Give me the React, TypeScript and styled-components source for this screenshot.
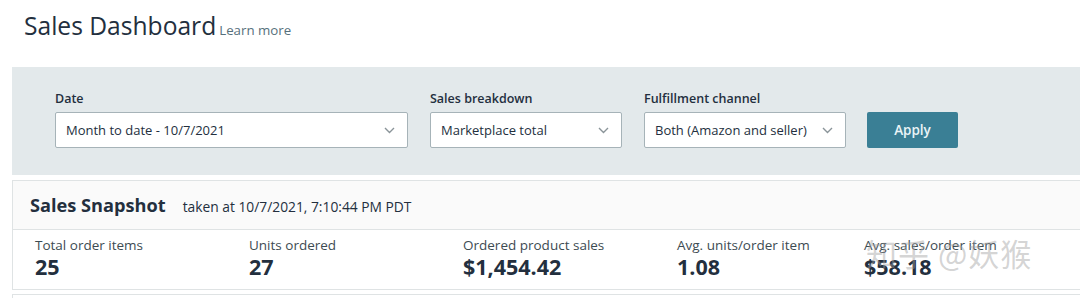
import React from "react";
import styled, { createGlobalStyle } from "styled-components";

const Global = createGlobalStyle`
  html, body { margin: 0; padding: 0; background: #ffffff; }
  body { font-family: "Open Sans", "Noto Sans", Arial, sans-serif; color: #232f3e; }
  * { box-sizing: border-box; }
`;

const Page = styled.div`
  width: 1080px;
  height: 298px;
  overflow: hidden;
  position: relative;
`;

const Header = styled.div`
  display: flex;
  align-items: baseline;
  gap: 3px;
  padding: 9px 0 0 24px;
  height: 67px;
`;

const Title = styled.h1`
  margin: 0;
  font-size: 24.6px;
  font-weight: 400;
  color: #232f3e;
`;

const LearnMore = styled.a`
  font-size: 13.3px;
  color: #56707c;
  text-decoration: none;
`;

const FilterPanel = styled.div`
  margin-left: 12px;
  height: 108px;
  background: #e3e9eb;
  display: flex;
  align-items: flex-end;
  gap: 22px;
  padding: 0 0 27px 43px;
`;

const Field = styled.div`
  display: flex;
  flex-direction: column;
  gap: 5px;
`;

const Label = styled.label`
  font-size: 12.5px;
  font-weight: 600;
  color: #232f3e;
  line-height: 16px;
`;

const Select = styled.div<{ $w: number }>`
  width: ${(p) => p.$w}px;
  height: 36px;
  background: #ffffff;
  border: 1px solid #a6b3b8;
  border-radius: 2px;
  display: flex;
  align-items: center;
  justify-content: space-between;
  padding: 0 12px 0 10px;
  font-size: 13px;
  color: #232f3e;
`;

const Chevron = () => (
  <svg width="11" height="7" viewBox="0 0 11 7" fill="none">
    <path d="M1 1l4.5 4.5L10 1" stroke="#8a9499" strokeWidth="1.4" />
  </svg>
);

const ApplyButton = styled.button`
  width: 91px;
  height: 36px;
  margin-left: -1px;
  border: none;
  border-radius: 2px;
  background: #3a7f95;
  color: #eaf4f7;
  font-family: inherit;
  font-size: 13.5px;
  font-weight: 600;
`;

const Card = styled.div`
  margin: 5px 0 0 12px;
  border: 1px solid #dfe3e4;
  border-right: none;
`;

const CardHeader = styled.div`
  height: 49px;
  background: #fafafa;
  border-bottom: 1px solid #dfe3e4;
  display: flex;
  align-items: center;
  gap: 17px;
  padding-left: 17px;
`;

const CardTitle = styled.h2`
  margin: 0;
  font-size: 18.2px;
  font-weight: 700;
  color: #232f3e;
`;

const Taken = styled.span`
  font-size: 13.8px;
  color: #232f3e;
  padding-top: 2px;
`;

const Metrics = styled.div`
  display: grid;
  grid-template-columns: 214px 214px 214px 187px 1fr;
  padding: 7px 0 10px 22px;
`;

const Metric = styled.div`
  display: flex;
  flex-direction: column;
`;

const MetricLabel = styled.span`
  font-size: 13.5px;
  color: #3d4b52;
  line-height: 17px;
`;

const MetricValue = styled.span`
  font-size: 21.5px;
  font-weight: 700;
  color: #232f3e;
  line-height: 25px;
`;

const NextCard = styled.div`
  margin: 4px 0 0 12px;
  height: 10px;
  border-top: 1px solid #dfe3e4;
  border-left: 1px solid #dfe3e4;
`;

const Watermark = styled.div`
  position: absolute;
  left: 866px;
  top: 230px;
  font-family: "Noto Sans CJK SC", sans-serif;
  font-size: 31px;
  color: rgba(160, 160, 160, 0.45);
  letter-spacing: 1px;
  pointer-events: none;
`;

const metrics = [
  { label: "Total order items", value: "25" },
  { label: "Units ordered", value: "27" },
  { label: "Ordered product sales", value: "$1,454.42" },
  { label: "Avg. units/order item", value: "1.08" },
  { label: "Avg. sales/order item", value: "$58.18" },
];

export default function App() {
  return (
    <Page>
      <Global />
      <Header>
        <Title>Sales Dashboard</Title>
        <LearnMore href="#">Learn more</LearnMore>
      </Header>
      <FilterPanel>
        <Field>
          <Label>Date</Label>
          <Select $w={353}>
            <span>Month to date - 10/7/2021</span>
            <Chevron />
          </Select>
        </Field>
        <Field>
          <Label>Sales breakdown</Label>
          <Select $w={192}>
            <span>Marketplace total</span>
            <Chevron />
          </Select>
        </Field>
        <Field>
          <Label>Fulfillment channel</Label>
          <Select $w={202}>
            <span>Both (Amazon and seller)</span>
            <Chevron />
          </Select>
        </Field>
        <ApplyButton>Apply</ApplyButton>
      </FilterPanel>
      <Card>
        <CardHeader>
          <CardTitle>Sales Snapshot</CardTitle>
          <Taken>taken at 10/7/2021, 7:10:44 PM PDT</Taken>
        </CardHeader>
        <Metrics>
          {metrics.map((m) => (
            <Metric key={m.label}>
              <MetricLabel>{m.label}</MetricLabel>
              <MetricValue>{m.value}</MetricValue>
            </Metric>
          ))}
        </Metrics>
      </Card>
      <NextCard />
      <Watermark>知乎 @妖猴</Watermark>
    </Page>
  );
}
